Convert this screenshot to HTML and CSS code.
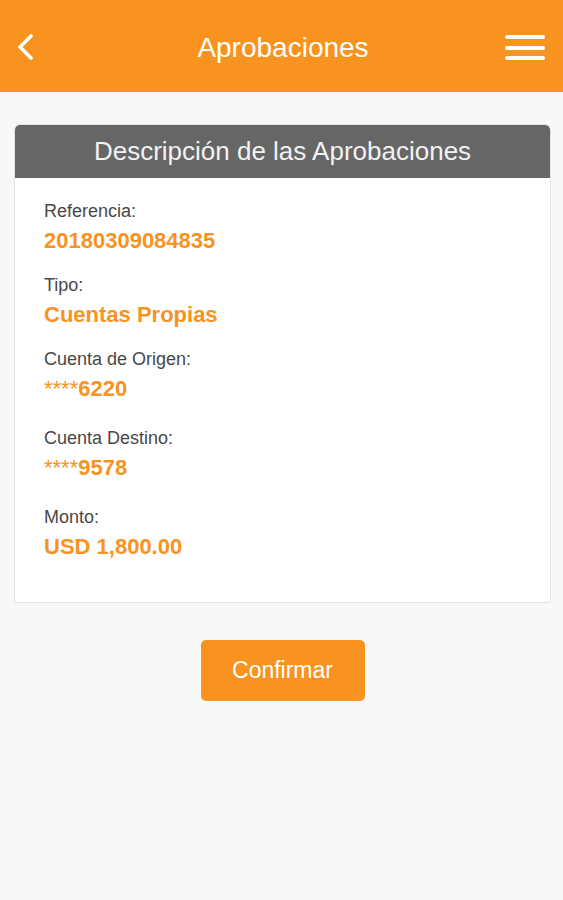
FILE: index.html
```html
<!DOCTYPE html>
<html lang="es">
<head>
    <meta charset="UTF-8">
    <meta name="viewport" content="width=device-width, initial-scale=1.0">
    <title>Aprobaciones</title>
    <link rel="stylesheet" href="styles.css">
</head>
<body>
    <header class="topbar">
        <button class="icon-btn back-btn" aria-label="Volver">
            <svg width="16" height="28" viewBox="0 0 16 28">
                <polyline points="14,3 3,14 14,25" fill="none" stroke="#fff" stroke-width="3.6" stroke-linecap="round" stroke-linejoin="round"/>
            </svg>
        </button>
        <h1 class="topbar-title">Aprobaciones</h1>
        <button class="icon-btn menu-btn" aria-label="Menú">
            <span></span><span></span><span></span>
        </button>
    </header>

    <main class="content">
        <section class="card">
            <h2 class="card-header">Descripción de las Aprobaciones</h2>
            <div class="card-body">
                <div class="field">
                    <div class="field-label">Referencia:</div>
                    <div class="field-value">20180309084835</div>
                </div>
                <div class="field">
                    <div class="field-label">Tipo:</div>
                    <div class="field-value">Cuentas Propias</div>
                </div>
                <div class="field">
                    <div class="field-label">Cuenta de Origen:</div>
                    <div class="field-value"><span class="mask">****</span>6220</div>
                </div>
                <div class="field field-spaced">
                    <div class="field-label">Cuenta Destino:</div>
                    <div class="field-value"><span class="mask">****</span>9578</div>
                </div>
                <div class="field field-spaced">
                    <div class="field-label">Monto:</div>
                    <div class="field-value">USD 1,800.00</div>
                </div>
            </div>
        </section>

        <button class="confirm-btn">Confirmar</button>
    </main>
</body>
</html>
```

FILE: styles.css
```css
body {
    margin: 0;
    font-family: "Liberation Sans", Arial, sans-serif;
    background-color: #f8f8f8;
    color: #444;
}

/* top bar */
.topbar {
    height: 92px;
    background-color: #f7931e;
    display: flex;
    align-items: center;
    justify-content: space-between;
    padding: 0 18px 0 17px;
    box-sizing: border-box;
}
.topbar-title {
    margin: 0;
    padding: 4px 0 0 4px;
    font-size: 28px;
    font-weight: normal;
    color: #fff;
    flex: 1;
    text-align: center;
}
.icon-btn {
    background: none;
    border: none;
    padding: 0;
    cursor: pointer;
}
.back-btn {
    width: 40px;
    height: 28px;
    display: flex;
    align-items: center;
    margin-top: 2px;
}
.menu-btn {
    width: 40px;
    display: flex;
    flex-direction: column;
    gap: 6.5px;
    margin-top: 3px;
}
.menu-btn span {
    display: block;
    height: 4px;
    background: #fff;
    border-radius: 2px;
}

/* card */
.content {
    padding: 32px 12px 0 14px;
}
.card {
    background: #fff;
    border: 1px solid #e3e3e3;
    border-radius: 6px 6px 2px 2px;
    overflow: hidden;
}
.card-header {
    margin: 0;
    height: 53px;
    background-color: #666;
    color: #f2f2f2;
    font-size: 26px;
    font-weight: normal;
    display: flex;
    align-items: center;
    justify-content: center;
}
.card-body {
    padding: 22px 29px 40px;
}
.field + .field {
    margin-top: 18px;
}
.field + .field-spaced {
    margin-top: 23px;
}
.field-label {
    font-size: 18px;
    line-height: 22px;
    color: #484848;
    margin-bottom: 4px;
}
.field-value {
    font-size: 22px;
    line-height: 30px;
    font-weight: bold;
    color: #f7931e;
}
.mask {
    font-weight: normal;
}

/* button */
.confirm-btn {
    display: block;
    margin: 37px auto 0;
    width: 164px;
    height: 61px;
    border: none;
    border-radius: 5px;
    background-color: #f7931e;
    color: #fff;
    font-family: "Liberation Sans", Arial, sans-serif;
    font-size: 23px;
    cursor: pointer;
}
```
